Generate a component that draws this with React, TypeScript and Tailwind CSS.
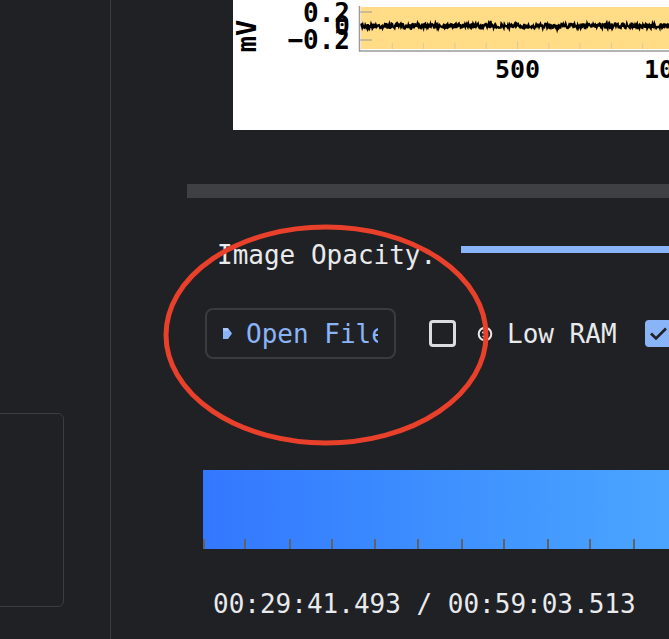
import React from "react";

const mono = "font-['DejaVu_Sans_Mono','Liberation_Mono',monospace]";

// deterministic noise so the trace looks the same every render
function makeTrace() {
  let seed = 7;
  const rand = () => {
    seed = (seed * 16807) % 2147483647;
    return seed / 2147483647;
  };
  const pts: string[] = [];
  for (let x = 128; x <= 440; x += 0.6) {
    let y = 26 + (rand() - 0.5) * 5;
    if (rand() > 0.985) y += (rand() - 0.5) * 9;
    pts.push(`${x.toFixed(2)},${y.toFixed(2)}`);
  }
  return pts.join(" ");
}

const trace = makeTrace();
const xTicks = [1, 2, 3, 4, 5, 6, 7, 8, 9, 10];
const timelineTicks = [0, 41, 86, 128, 171, 214, 258, 300, 344, 386, 430, 473];

function Chart() {
  return (
    <div className="ml-[122px] h-[130px] bg-white overflow-hidden">
      <svg width="460" height="130" className={mono}>
        <rect x="128" y="7" width="332" height="42" fill="#ffdc85" />
        {[12, 26, 40].map((y) => (
          <line key={y} x1="127" x2="139" y1={y} y2={y} stroke="#9a9a9a" strokeWidth="1" />
        ))}
        {xTicks.map((k) => (
          <line
            key={k}
            x1={128 + k * 31.3}
            x2={128 + k * 31.3}
            y1={k === 5 ? 41 : 43}
            y2="49"
            stroke="#d8c9a0"
            strokeWidth="1"
          />
        ))}
        <polyline points={trace} fill="none" stroke="#000" strokeWidth="2.2" />
        <line x1="126.5" x2="126.5" y1="6" y2="51.5" stroke="#9a9a9a" strokeWidth="1.5" />
        <line x1="126" x2="460" y1="51" y2="51" stroke="#9a9a9a" strokeWidth="1.5" />
        <text x="117" y="22" textAnchor="end" fontSize="26" fontWeight="bold" fill="#000">
          0.2
        </text>
        <text x="117" y="35" textAnchor="end" fontSize="26" fontWeight="bold" fill="#000">
          0
        </text>
        <text x="117" y="49" textAnchor="end" fontSize="26" fontWeight="bold" fill="#000">
          −0.2
        </text>
        <text
          x="23"
          y="36"
          textAnchor="middle"
          fontSize="27"
          fontWeight="bold"
          fill="#000"
          transform="rotate(-90 23 36)"
        >
          mV
        </text>
        <text x="284.5" y="78" textAnchor="middle" fontSize="25" fontWeight="bold" fill="#000">
          500
        </text>
        <text x="441" y="78" textAnchor="middle" fontSize="25" fontWeight="bold" fill="#000">
          1000
        </text>
      </svg>
    </div>
  );
}

function PlayIcon() {
  return (
    <svg width="9" height="11" viewBox="0 0 9 11" className="shrink-0">
      <path d="M0 0 H5 L9 5.5 L5 11 H0 Z" fill="#8ab4f8" />
      <rect x="0" y="0" width="5" height="3" fill="#a9c7fa" />
    </svg>
  );
}

function ChipIcon() {
  return (
    <svg width="16" height="16" viewBox="0 0 16 16" className="shrink-0">
      <circle cx="8" cy="8" r="6.3" fill="none" stroke="#e8eaed" strokeWidth="2" />
      <circle cx="6" cy="6.5" r="1" fill="#e8eaed" />
      <circle cx="10" cy="6.5" r="1" fill="#e8eaed" />
      <path d="M5.5 10 Q8 11.5 10.5 10" fill="none" stroke="#e8eaed" strokeWidth="1.2" />
    </svg>
  );
}

export default function App() {
  return (
    <div className={`relative flex h-[639px] w-[669px] overflow-hidden bg-[#202124] text-[#e8eaed] ${mono}`}>
      {/* left sidebar */}
      <div className="w-[111px] shrink-0 border-r border-[#3c3d40]">
        <div className="-ml-[10px] mt-[413px] h-[194px] w-[74px] rounded-[6px] border border-[#3c3d40]" />
      </div>

      {/* main column */}
      <div className="flex min-w-0 flex-1 flex-col">
        <Chart />

        <div className="ml-[76px] mt-[54px] h-[14px] bg-[#3f4043]" />

        <div className="ml-[106px] mt-[42px] flex items-start gap-[25px]">
          <span className="shrink-0 whitespace-nowrap text-[26px] leading-[30px]">Image Opacity:</span>
          <div className="mt-[6px] h-[7px] flex-1 bg-[#8ab4f8]" />
        </div>

        <div className="ml-[94px] mt-[38px] flex items-center">
          <button className="flex h-[51px] w-[191px] shrink-0 items-center gap-[14px] rounded-[8px] border-2 border-[#3a3b3e] px-[16px] text-[#8ab4f8]">
            <PlayIcon />
            <span className="min-w-0 flex-1 overflow-hidden whitespace-nowrap text-left text-[26px] leading-[30px]">
              Open File
            </span>
          </button>
          <div className="ml-[33px] h-[27px] w-[27px] shrink-0 rounded-[4px] border-[3px] border-[#dadce0]" />
          <div className="ml-[21px]">
            <ChipIcon />
          </div>
          <span className="ml-[14px] shrink-0 whitespace-nowrap text-[26px] leading-[30px]">Low RAM</span>
          <div className="ml-[28px] flex h-[27px] w-[27px] shrink-0 items-center justify-center rounded-[4px] bg-[#8ab4f8]">
            <svg width="19" height="15" viewBox="0 0 19 15">
              <path d="M2 7.5 L7 12.5 L17 2.5" fill="none" stroke="#202124" strokeWidth="2.6" />
            </svg>
          </div>
        </div>

        <div className="relative ml-[92px] mt-[111px] h-[79px] bg-gradient-to-r from-[#3377ff] to-[#4ba5ff]">
          {timelineTicks.map((x) => (
            <div
              key={x}
              className="absolute bottom-0 h-[10px] w-[2px] bg-[#5f6368]"
              style={{ left: x }}
            />
          ))}
        </div>

        <div className="ml-[102px] mt-[40px] whitespace-nowrap text-[26px] leading-[30px]">
          00:29:41.493 / 00:59:03.513
        </div>
      </div>

      {/* annotation ring */}
      <svg className="pointer-events-none absolute left-0 top-0" width="669" height="639">
        <ellipse cx="326" cy="335" rx="160" ry="108" fill="none" stroke="#e8402a" strokeWidth="5" />
      </svg>
    </div>
  );
}
